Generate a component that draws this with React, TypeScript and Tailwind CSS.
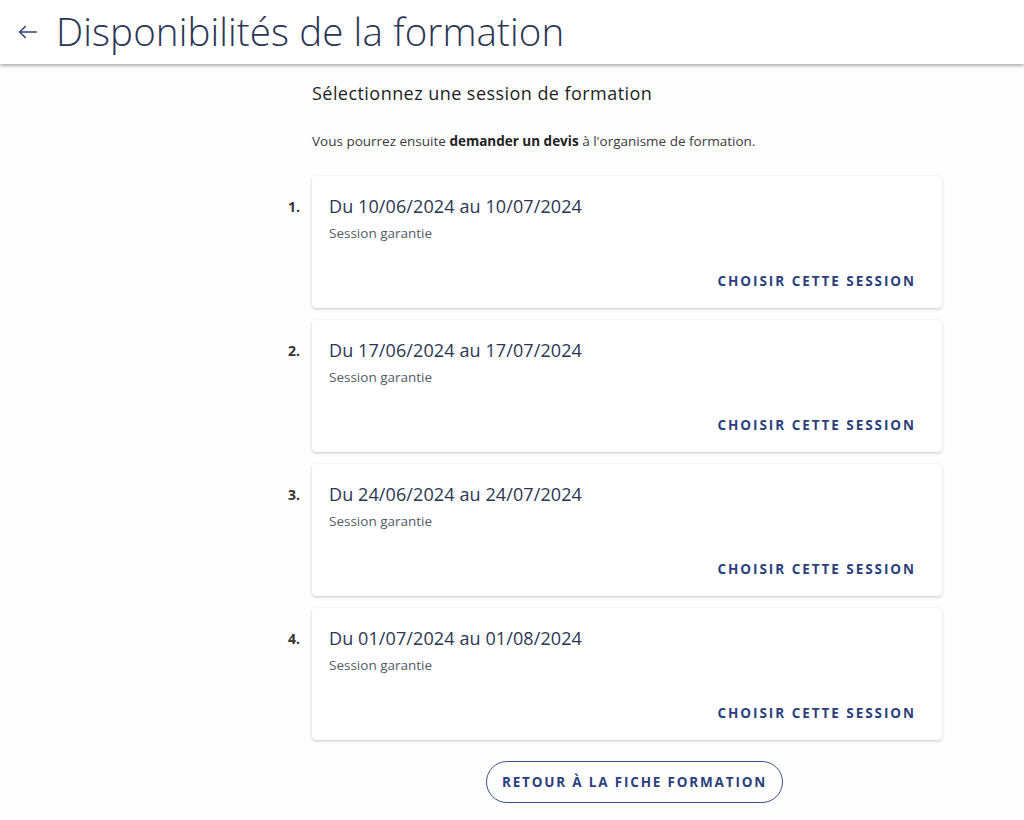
import React from "react"

type Session = {
    start: string
    end: string
}

const sessions: Session[] = [
    { start: "10/06/2024", end: "10/07/2024" },
    { start: "17/06/2024", end: "17/07/2024" },
    { start: "24/06/2024", end: "24/07/2024" },
    { start: "01/07/2024", end: "01/08/2024" }
]

const App = () => {
    return (
        <div className="min-h-[820px] bg-[#fefefe] text-[#2b3654]" style={{ fontFamily: "'Open Sans', Lato, sans-serif" }}>
            {/* Header */}
            <header className="h-[64px] bg-white flex items-center shadow-[0_2px_3px_rgba(0,0,0,0.3)] relative">
                <button type="button" className="ml-[17px] mr-[17px] text-[#2a3f7d]">
                    <svg width="22" height="22" viewBox="0 0 24 24" fill="none" stroke="currentColor" strokeWidth="1.6" strokeLinecap="round" strokeLinejoin="round">
                        <path d="M21 12H3" />
                        <path d="M9 6l-6 6 6 6" />
                    </svg>
                </button>
                <h1 className="text-[38.5px] font-light text-[#2b3654] tracking-[0.1px] -mt-[1px]">
                    Disponibilités de la formation
                </h1>
            </header>

            {/* Body */}
            <main className="w-[630px] ml-[312px] pt-[17px]">
                <h2 className="text-[18px] font-medium tracking-[0.45px] text-[#1e1e1e] leading-[24px]">
                    Sélectionnez une session de formation
                </h2>
                <p className="mt-[26px] text-[13.5px] text-[#3a3a3a] leading-[20px]">
                    Vous pourrez ensuite <b className="font-bold text-[#1e1e1e]">demander un devis</b> à l'organisme de formation.
                </p>

                <ol className="mt-[25px] flex flex-col gap-[12px]">
                    {sessions.map((s, i) => (
                        <li key={i} className="relative">
                            <span className="absolute -left-[24px] top-[20px] text-[14px] font-bold text-[#333]">
                                {i + 1}.
                            </span>
                            <div className="h-[132px] bg-white rounded-[4px] shadow-[0_1px_3px_rgba(0,0,0,0.22)] px-[17px] pt-[17px] pb-[17px] flex flex-col">
                                <div className="text-[18px] font-medium tracking-[0.1px] text-[#2b3654] leading-[26px]">
                                    Du {s.start} au {s.end}
                                </div>
                                <div className="mt-[5px] text-[13.5px] text-[#555a66] leading-[18px]">
                                    Session garantie
                                </div>
                                <div className="mt-auto flex justify-end">
                                    <button type="button" className="mr-[9px] text-[13.5px] font-bold tracking-[0.145em] text-[#2a3f7d] uppercase">
                                        Choisir cette session
                                    </button>
                                </div>
                            </div>
                        </li>
                    ))}
                </ol>

                <div className="flex justify-center mt-[21px] pl-[15px]">
                    <button type="button" className="h-[42px] px-[15px] rounded-full border border-[#3d5191] text-[13.5px] font-bold tracking-[0.135em] text-[#2a3f7d] uppercase">
                        Retour à la fiche formation
                    </button>
                </div>
            </main>
        </div>
    )
}

export default App
